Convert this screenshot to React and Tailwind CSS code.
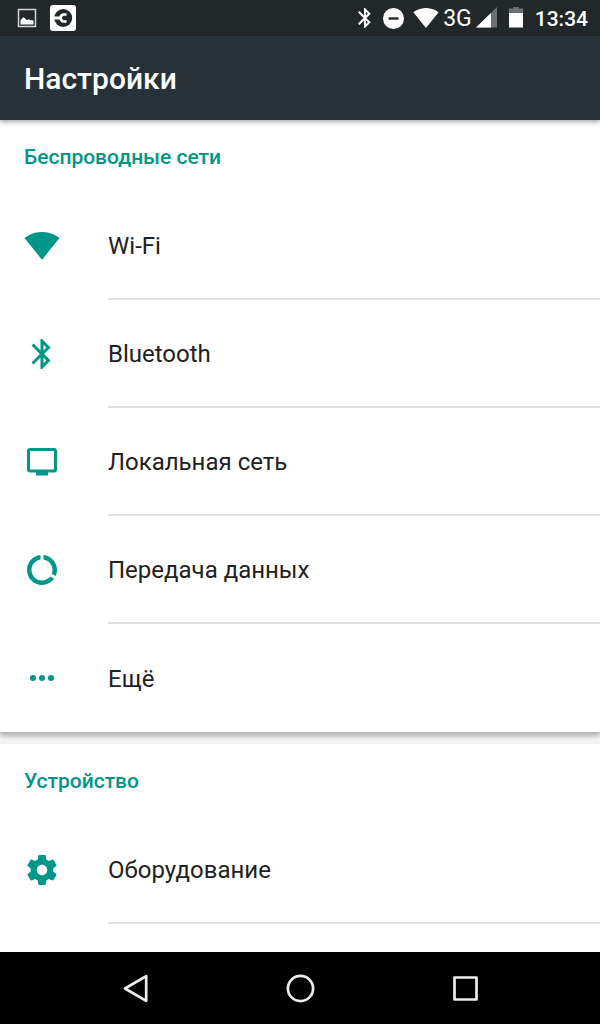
const sections = [
  {
    title: 'Беспроводные сети',
    items: [
      { label: 'Wi-Fi', icon: WifiIcon },
      { label: 'Bluetooth', icon: BluetoothIcon },
      { label: 'Локальная сеть', icon: EthernetIcon },
      { label: 'Передача данных', icon: DataUsageIcon },
      { label: 'Ещё', icon: MoreIcon },
    ],
  },
  {
    title: 'Устройство',
    items: [{ label: 'Оборудование', icon: GearIcon, divider: true }],
  },
];

function WifiIcon({ className }) {
  return (
    <svg viewBox="0 0 24 24" fill="currentColor" className={className} aria-hidden="true">
      <path d="M12.01 21.2L23.64 6.7c-.45-.34-4.93-4-11.64-4C5.28 2.7.81 6.36.36 6.7l11.63 14.49.01.01.01-.01z" />
    </svg>
  );
}

function BluetoothIcon({ className }) {
  return (
    <svg viewBox="0 0 24 24" fill="currentColor" className={className} aria-hidden="true">
      <path d="M17.71 7.71L12 2h-1v7.59L6.41 5 5 6.41 10.59 12 5 17.59 6.41 19 11 14.41V22h1l5.71-5.71-4.3-4.29 4.3-4.29zM13 5.83l1.88 1.88L13 9.59V5.83zm1.88 10.46L13 18.17v-3.76l1.88 1.88z" />
    </svg>
  );
}

function EthernetIcon({ className }) {
  return (
    <svg viewBox="0 0 24 24" fill="currentColor" className={className} aria-hidden="true">
      <path d="M20.2 2.7H3.8C2.8 2.7 2 3.5 2 4.5v12.7c0 1 .8 1.8 1.8 1.8H8v2h8v-2h4.2c1 0 1.8-.8 1.8-1.8V4.5c0-1-.8-1.8-1.8-1.8zM20 17H4V4.7h16V17z" />
    </svg>
  );
}

function DataUsageIcon({ className }) {
  return (
    <svg viewBox="0 0 24 24" fill="currentColor" className={className} aria-hidden="true">
      <path d="M13 2.05v3.03c3.39.49 6 3.39 6 6.92 0 .9-.18 1.75-.48 2.54l2.6 1.53c.56-1.24.88-2.62.88-4.07 0-5.18-3.95-9.45-9-9.95zM12 19c-3.87 0-7-3.13-7-7 0-3.53 2.61-6.43 6-6.92V2.05c-5.06.5-9 4.76-9 9.95 0 5.52 4.47 10 9.99 10 3.31 0 6.24-1.61 8.06-4.09l-2.6-1.53C16.17 17.98 14.21 19 12 19z" />
    </svg>
  );
}

function MoreIcon({ className }) {
  return (
    <svg viewBox="0 0 24 24" fill="currentColor" className={className} aria-hidden="true">
      <circle cx="6" cy="12" r="2" />
      <circle cx="12" cy="12" r="2" />
      <circle cx="18" cy="12" r="2" />
    </svg>
  );
}

function GearIcon({ className }) {
  return (
    <svg viewBox="0 0 24 24" fill="currentColor" className={className} aria-hidden="true">
      <path d="M19.43 12.98c.04-.32.07-.64.07-.98s-.03-.66-.07-.98l2.11-1.65c.19-.15.24-.42.12-.64l-2-3.46c-.12-.22-.39-.3-.61-.22l-2.49 1c-.52-.4-1.08-.73-1.69-.98l-.38-2.65C14.46 2.18 14.25 2 14 2h-4c-.25 0-.46.18-.49.42l-.38 2.65c-.61.25-1.17.59-1.69.98l-2.49-1c-.23-.09-.49 0-.61.22l-2 3.46c-.13.22-.07.49.12.64l2.11 1.65c-.04.32-.07.65-.07.98s.03.66.07.98l-2.11 1.65c-.19.15-.24.42-.12.64l2 3.46c.12.22.39.3.61.22l2.49-1c.52.4 1.08.73 1.69.98l.38 2.65c.03.24.24.42.49.42h4c.25 0 .46-.18.49-.42l.38-2.65c.61-.25 1.17-.59 1.69-.98l2.49 1c.23.09.49 0 .61-.22l2-3.46c.12-.22.07-.49-.12-.64l-2.11-1.65zM12 15.5c-1.93 0-3.5-1.57-3.5-3.5s1.57-3.5 3.5-3.5 3.5 1.57 3.5 3.5-1.57 3.5-3.5 3.5z" />
    </svg>
  );
}

function StatusBar() {
  return (
    <div className="flex h-9 shrink-0 items-center justify-between bg-[#22272a] pr-3 pl-4 text-white">
      <div className="flex items-center gap-3">
        {/* Screenshot saved */}
        <svg viewBox="0 0 22 22" className="size-[22px]" aria-hidden="true">
          <rect x="2.5" y="2.5" width="17" height="17" fill="none" stroke="#d3d4d5" strokeWidth="1.5" />
          <path d="M4.5 17.5v-4.2l2-2.3 1.3-.7 1.5 1.5 1.5 1.3 2.2-.8 1.7 1.3 1.6-.6 1.2 1.2v3.3z" fill="#fff" />
        </svg>
        <svg viewBox="0 0 26 26" className="size-[26px]" aria-hidden="true">
          <rect width="26" height="26" rx="3" fill="#fff" />
          <circle cx="13.2" cy="13" r="9" fill="#22272a" />
          <path d="M3 11.5h6.4c.6-2 2.2-3.2 4.2-3.2h3v2.4h-3.4L11.7 13l1.5 2.3h3.4v2.4h-3c-2 0-3.600-1.200-4.200-3.200H3z" fill="#fff" />
        </svg>
      </div>

      <div className="flex items-center">
        <BluetoothIcon className="mr-1 size-6" />
        <svg viewBox="0 0 24 24" className="mr-2 size-6" aria-hidden="true">
          <circle cx="12.5" cy="12.5" r="10.5" fill="#fff" />
          <path d="M7.5 12.5h10" stroke="#22272a" strokeWidth="2.4" />
        </svg>
        <WifiIcon className="mr-1 size-[26px]" />
        <span className="mr-1 pt-0.5 text-[23px] leading-6">3G</span>
        <svg viewBox="0 0 21 22" className="mr-3 h-[22px] w-[21px]" aria-hidden="true">
          <path d="M0 20.500L21 0v20.500z" fill="#6b6f71" />
          <path d="M0 20.500L15 5.900v14.600z" fill="#fff" />
        </svg>
        <svg viewBox="0 0 14 22" className="mr-3 h-[22px] w-[14px]" aria-hidden="true">
          <path d="M0 1.500h4V0h6v1.500h4V6H0z" fill="#6b6f71" />
          <path d="M0 6h14v14.500H0z" fill="#fff" />
        </svg>
        <span className="pt-0.5 text-[21px] leading-6 font-medium">13:34</span>
      </div>
    </div>
  );
}

function SettingsRow({ label, icon: Icon, divider }) {
  return (
    <li>
      <a href="#" className="flex h-[108px] items-center pl-6 text-2xl text-[#212121]">
        <Icon className="mr-12 size-9 shrink-0 text-[#009688]" />
        <span className={`flex h-full flex-1 items-center pt-0.5 ${divider ? 'border-b-2 border-[#e0e0e0]' : ''}`}>
          {label}
        </span>
      </a>
    </li>
  );
}

function SettingsSection({ title, items }) {
  return (
    <section className="bg-white shadow-[0_4px_5px_rgba(0,0,0,0.28)] last:grow">
      <h2 className="flex h-18 items-center px-6 pt-1 text-[21px] font-medium text-[#009688]">{title}</h2>
      <ul>
        {items.map((item, idx) => (
          <SettingsRow key={item.label} {...item} divider={item.divider || idx < items.length - 1} />
        ))}
      </ul>
    </section>
  );
}

function NavBar() {
  return (
    <nav className="flex h-18 shrink-0 items-center justify-center gap-[129px] bg-black text-[#ececec]">
      <button type="button" aria-label="Назад">
        <svg viewBox="0 0 36 36" fill="none" stroke="currentColor" strokeWidth="2.7" strokeLinejoin="round" className="size-9">
          <path d="M8 18.5L29.2 6.2v24.6z" />
        </svg>
      </button>
      <button type="button" aria-label="Главный экран">
        <svg viewBox="0 0 36 36" fill="none" stroke="currentColor" strokeWidth="2.7" className="size-9">
          <circle cx="18.5" cy="18.5" r="12.6" />
        </svg>
      </button>
      <button type="button" aria-label="Недавние">
        <svg viewBox="0 0 36 36" fill="none" stroke="currentColor" strokeWidth="2.7" strokeLinejoin="round" className="size-9">
          <rect x="7.5" y="7.5" width="22" height="22" />
        </svg>
      </button>
    </nav>
  );
}

export default function App() {
  return (
    <div className="flex h-screen flex-col bg-[#f5f5f5] font-[Roboto,sans-serif]">
      <StatusBar />
      <header className="relative z-10 flex h-21 shrink-0 items-center bg-[#273238] px-6 pt-0.5 shadow-[0_2px_5px_rgba(0,0,0,0.35)]">
        <h1 className="text-3xl font-medium text-white">Настройки</h1>
      </header>
      <main className="flex flex-1 flex-col gap-3 overflow-y-auto">
        {sections.map((section) => (
          <SettingsSection key={section.title} {...section} />
        ))}
      </main>
      <NavBar />
    </div>
  );
}
